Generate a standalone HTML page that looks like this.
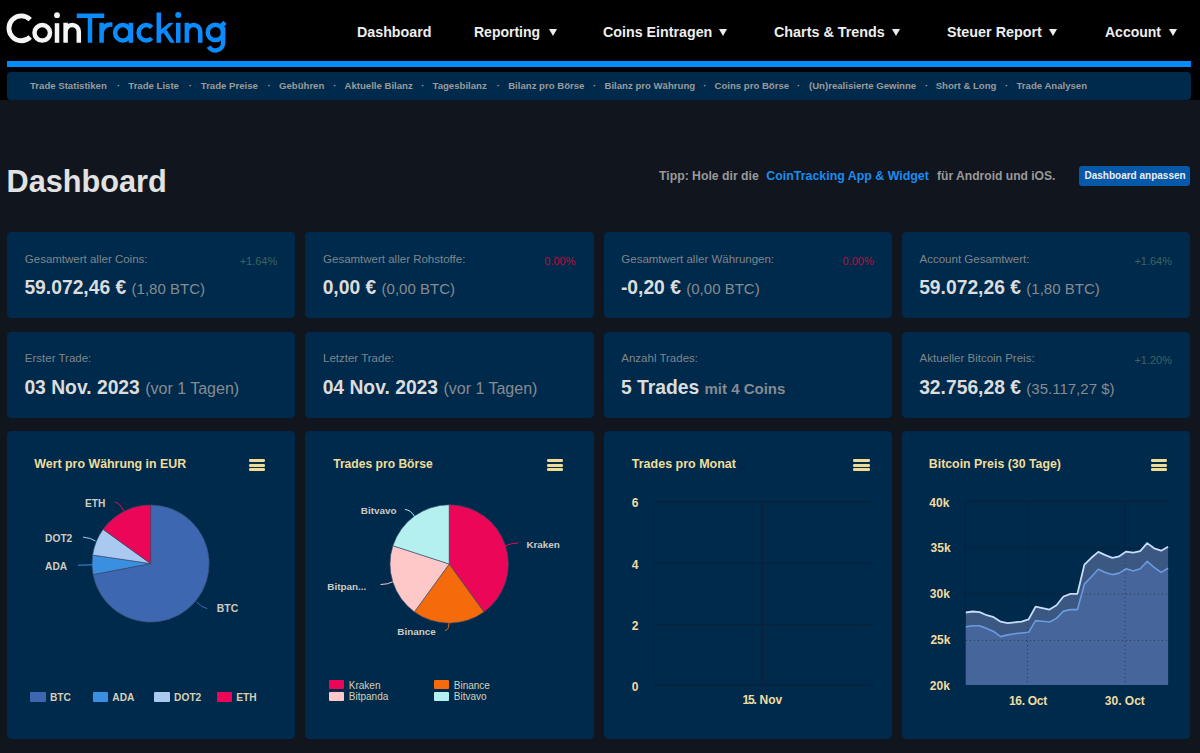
<!DOCTYPE html>
<html><head><meta charset="utf-8">
<style>
*{margin:0;padding:0;box-sizing:border-box}
html,body{width:1200px;height:753px;overflow:hidden;background:#11161e;font-family:"Liberation Sans",sans-serif}
.a{position:absolute;white-space:nowrap}
#hdr{position:absolute;left:0;top:0;width:1200px;height:100px;background:#000}
#bl{position:absolute;left:6.6px;top:61px;width:1184.2px;height:5.8px;background:#008cff}
#sub{position:absolute;left:6.6px;top:71.5px;width:1184.2px;height:28.3px;background:#002a4b;border-radius:4px}
.nav{font-weight:bold;font-size:14px;color:#eee;top:24px;line-height:16px}
.tri{position:absolute;top:28.5px;width:0;height:0;border-left:4.2px solid transparent;border-right:4.2px solid transparent;border-top:7.4px solid #eee}
.sn{font-weight:bold;font-size:9.6px;color:#9a9a9a;top:80px;line-height:12px}
.card{position:absolute;background:#002a4b;border-radius:4.5px}
.lbl{font-size:11.5px;color:#7f858c;line-height:14px}
.val{font-weight:bold;font-size:19.3px;color:#dcdcdc;line-height:22px}
.sec{font-size:15px;color:#878b90;font-weight:normal}
.pct{font-size:11px;color:#3f6262;line-height:12px}
.neg{color:#b8103c}
.ct{font-weight:bold;font-size:12.4px;color:#eedd9c;line-height:14px}
.hb{position:absolute;width:16px;height:13px}
.hb i{position:absolute;left:0;width:16.4px;height:3px;background:#eedc96;border-radius:1.2px}
</style></head><body>
<div id="hdr"></div>
<svg class="a" style="left:0;top:0" width="240" height="60" viewBox="0 0 240 60">
<g fill="none" stroke-width="4.5" stroke-linecap="butt">
<g stroke="#f5f5f5">
<path d="M30.2,19.7 A12.4,12.4 0 1 0 30.2,37" stroke-width="4.8"/>
<circle cx="42.25" cy="32.85" r="7.75"/>
<path d="M57,23.2 V42.8"/>
<path d="M65.6,22.7 V42.8 M65.6,31.5 A6.6,6.6 0 0 1 78.8,31.5 V42.8"/>
</g>
<circle cx="57" cy="15.2" r="2.9" fill="#f5f5f5"/>
<g stroke="#0a8cff">
<path d="M76.75,15.75 H104.25 M90,13.5 V42.8"/>
<path d="M101.6,22.8 V42.8 M101.6,33.6 A9,9 0 0 1 110.6,24.6 H112.4"/>
<circle cx="122.8" cy="32.8" r="7.7"/>
<path d="M130.9,22.8 V42.8"/>
<path d="M151.75,27.35 A7.7,7.7 0 1 0 151.75,38.25"/>
<path d="M158.8,12.5 V42.8"/>
<path d="M178.25,22.8 V42.8"/>
<path d="M186.85,22.7 V42.8 M186.85,31.65 A6.7,6.7 0 0 1 200.25,31.65 V42.8"/>
<circle cx="215.4" cy="32.4" r="7.7"/>
<path d="M223.1,27 V42.7 A7.7,7.7 0 0 1 208.7,46.55"/>
<path d="M221.8,25.6 L225,22.4"/>
</g>
<circle cx="178.25" cy="15" r="3" fill="#0a8cff"/>
<polygon points="160.5,30 168.8,23 173.6,23 160.5,35.2" fill="#0a8cff"/>
<polygon points="163.2,32.6 166.4,29.4 174.8,42.8 170.4,42.8" fill="#0a8cff"/>
</g>
</svg>
<div class="a nav" style="left:357px;font-size:14.25px">Dashboard</div>
<div class="a nav" style="left:474px">Reporting</div><div class="tri" style="left:548.5px"></div>
<div class="a nav" style="left:603px;font-size:14.25px">Coins Eintragen</div><div class="tri" style="left:719.3px"></div>
<div class="a nav" style="left:774px;font-size:14.35px">Charts &amp; Trends</div><div class="tri" style="left:892px"></div>
<div class="a nav" style="left:947px;font-size:14.35px">Steuer Report</div><div class="tri" style="left:1049.4px"></div>
<div class="a nav" style="left:1105px">Account</div><div class="tri" style="left:1168.6px"></div>
<div id="bl"></div>
<div id="sub"></div>
<div class="a sn" style="left:30px">Trade Statistiken</div>
<div class="a sn" style="left:117px">·</div>
<div class="a sn" style="left:128.3px">Trade Liste</div>
<div class="a sn" style="left:188.75px">·</div>
<div class="a sn" style="left:200.8px">Trade Preise</div>
<div class="a sn" style="left:267.5px">·</div>
<div class="a sn" style="left:279px">Gebühren</div>
<div class="a sn" style="left:333.25px">·</div>
<div class="a sn" style="left:344.5px">Aktuelle Bilanz</div>
<div class="a sn" style="left:421.25px">·</div>
<div class="a sn" style="left:432.5px">Tagesbilanz</div>
<div class="a sn" style="left:496.75px">·</div>
<div class="a sn" style="left:508.2px">Bilanz pro Börse</div>
<div class="a sn" style="left:593px">·</div>
<div class="a sn" style="left:604.5px">Bilanz pro Währung</div>
<div class="a sn" style="left:703.25px">·</div>
<div class="a sn" style="left:714.5px">Coins pro Börse</div>
<div class="a sn" style="left:797px">·</div>
<div class="a sn" style="left:809px">(Un)realisierte Gewinne</div>
<div class="a sn" style="left:925px">·</div>
<div class="a sn" style="left:935.7px">Short &amp; Long</div>
<div class="a sn" style="left:1005px">·</div>
<div class="a sn" style="left:1016.5px">Trade Analysen</div>

<!-- title row -->
<div class="a" style="left:6.5px;top:164.8px;font-weight:bold;font-size:30.7px;line-height:34px;color:#e2e2e2">Dashboard</div>
<div class="a" style="left:659px;top:168.5px;font-weight:bold;font-size:12.25px;line-height:14px;color:#999">Tipp: Hole dir die</div>
<div class="a" style="left:766.3px;top:168.5px;font-weight:bold;font-size:12.4px;line-height:14px;color:#1b8cf0">CoinTracking App &amp; Widget</div>
<div class="a" style="left:937px;top:168.5px;font-weight:bold;font-size:12.1px;line-height:14px;color:#999">für Android und iOS.</div>
<div class="a" style="left:1079px;top:165.5px;width:111px;height:20.5px;background:#0659a8;border-radius:3px"></div>
<div class="a" style="left:1084.5px;top:170.3px;font-weight:bold;font-size:10px;line-height:12px;color:#e8eef5">Dashboard anpassen</div>

<!-- CARDS -->
<div class="card" style="left:7px;top:232.2px;width:288.25px;height:86.2px"></div>
<div class="a lbl" style="left:24.8px;top:251.70px">Gesamtwert aller Coins:</div>
<div class="a val" style="left:24.4px;top:276.9px">59.072,46 € <span class="sec">(1,80 BTC)</span></div>
<div class="a pct" style="right:922.75px;top:254.5px">+1.64%</div>
<div class="card" style="left:305.25px;top:232.2px;width:288.25px;height:86.2px"></div>
<div class="a lbl" style="left:323.05px;top:251.70px">Gesamtwert aller Rohstoffe:</div>
<div class="a val" style="left:322.65px;top:276.9px">0,00 € <span class="sec">(0,00 BTC)</span></div>
<div class="a pct neg" style="right:624.5px;top:254.5px">0.00%</div>
<div class="card" style="left:603.5px;top:232.2px;width:288.25px;height:86.2px"></div>
<div class="a lbl" style="left:621.3px;top:251.70px">Gesamtwert aller Währungen:</div>
<div class="a val" style="left:620.9px;top:276.9px">-0,20 € <span class="sec">(0,00 BTC)</span></div>
<div class="a pct neg" style="right:326.25px;top:254.5px">0.00%</div>
<div class="card" style="left:901.75px;top:232.2px;width:288.25px;height:86.2px"></div>
<div class="a lbl" style="left:919.55px;top:251.70px">Account Gesamtwert:</div>
<div class="a val" style="left:919.15px;top:276.9px">59.072,26 € <span class="sec">(1,80 BTC)</span></div>
<div class="a pct" style="right:28.0px;top:254.5px">+1.64%</div>
<div class="card" style="left:7px;top:332.05px;width:288.25px;height:86.2px"></div>
<div class="a lbl" style="left:24.8px;top:350.95px">Erster Trade:</div>
<div class="a val" style="left:24.4px;top:376.75px">03 Nov. 2023 <span class="sec" style="font-size:16px">(vor 1 Tagen)</span></div>
<div class="card" style="left:305.25px;top:332.05px;width:288.25px;height:86.2px"></div>
<div class="a lbl" style="left:323.05px;top:350.95px">Letzter Trade:</div>
<div class="a val" style="left:322.65px;top:376.75px">04 Nov. 2023 <span class="sec" style="font-size:16px">(vor 1 Tagen)</span></div>
<div class="card" style="left:603.5px;top:332.05px;width:288.25px;height:86.2px"></div>
<div class="a lbl" style="left:621.3px;top:350.95px">Anzahl Trades:</div>
<div class="a val" style="left:620.9px;top:376.75px">5 Trades <span class="sec" style="font-weight:bold">mit 4 Coins</span></div>
<div class="card" style="left:901.75px;top:332.05px;width:288.25px;height:86.2px"></div>
<div class="a lbl" style="left:919.55px;top:350.95px">Aktueller Bitcoin Preis:</div>
<div class="a val" style="left:919.15px;top:376.75px">32.756,28 € <span class="sec">(35.117,27 $)</span></div>
<div class="a pct" style="right:28.0px;top:354.35px">+1.20%</div>
<!-- /CARDS -->
<!-- CHARTS -->
<div class="card" style="left:7px;top:431.2px;width:288.25px;height:307.9px"></div>
<div class="card" style="left:305.25px;top:431.2px;width:288.25px;height:307.9px"></div>
<div class="card" style="left:603.5px;top:431.2px;width:288.25px;height:307.9px"></div>
<div class="card" style="left:901.75px;top:431.2px;width:288.25px;height:307.9px"></div>
<div class="a ct" style="left:34.3px;top:456.7px;font-size:12.4px">Wert pro Währung in EUR</div>
<div class="a ct" style="left:333.2px;top:456.7px;font-size:12.1px">Trades pro Börse</div>
<div class="a ct" style="left:631.8px;top:456.7px;font-size:12.5px">Trades pro Monat</div>
<div class="a ct" style="left:928.8px;top:456.7px;font-size:12.35px">Bitcoin Preis (30 Tage)</div>
<div class="hb" style="left:248.6px;top:458.9px"><i style="top:0"></i><i style="top:4.75px"></i><i style="top:9.55px"></i></div>
<div class="hb" style="left:547px;top:458.9px"><i style="top:0"></i><i style="top:4.75px"></i><i style="top:9.55px"></i></div>
<div class="hb" style="left:853.3px;top:458.9px"><i style="top:0"></i><i style="top:4.75px"></i><i style="top:9.55px"></i></div>
<div class="hb" style="left:1150.8px;top:458.9px"><i style="top:0"></i><i style="top:4.75px"></i><i style="top:9.55px"></i></div>
<svg class="a" style="left:0;top:0" width="1200" height="753" viewBox="0 0 1200 753">
<path d="M150.6,563.6 L150.60,505.00 A58.6,58.6 0 1 1 93.04,574.58 Z" fill="#3d67b1" stroke="#3a4a66" stroke-width="0.6" stroke-linejoin="round"/>
<path d="M150.6,563.6 L93.04,574.58 A58.6,58.6 0 0 1 92.63,555.04 Z" fill="#3a8fe0" stroke="#3a4a66" stroke-width="0.6" stroke-linejoin="round"/>
<path d="M150.6,563.6 L92.63,555.04 A58.6,58.6 0 0 1 103.07,529.32 Z" fill="#a9c9f1" stroke="#3a4a66" stroke-width="0.6" stroke-linejoin="round"/>
<path d="M150.6,563.6 L103.07,529.32 A58.6,58.6 0 0 1 150.60,505.00 Z" fill="#eb0658" stroke="#3a4a66" stroke-width="0.6" stroke-linejoin="round"/>
<g fill="none" stroke-width="1">
<path d="M114.7,502.2 Q121,503.5 123.6,511.1" stroke="#eb0658"/>
<path d="M83,537.1 Q91,537.8 95.5,541" stroke="#a9c9f1"/>
<path d="M78,565.2 L92.5,564.8" stroke="#3a8fe0"/>
<path d="M196.6,602 Q202,607.5 207.3,608.7" stroke="#3d67b1"/>
</g>
<path d="M449.2,564 L449.20,504.80 A59.2,59.2 0 0 1 484.00,611.89 Z" fill="#eb0658" stroke="#3a4a66" stroke-width="0.6" stroke-linejoin="round"/>
<path d="M449.2,564 L484.00,611.89 A59.2,59.2 0 0 1 414.40,611.89 Z" fill="#f56a0a" stroke="#3a4a66" stroke-width="0.6" stroke-linejoin="round"/>
<path d="M449.2,564 L414.40,611.89 A59.2,59.2 0 0 1 392.90,545.71 Z" fill="#ffc8c8" stroke="#3a4a66" stroke-width="0.6" stroke-linejoin="round"/>
<path d="M449.2,564 L392.90,545.71 A59.2,59.2 0 0 1 449.20,504.80 Z" fill="#b3f0ef" stroke="#3a4a66" stroke-width="0.6" stroke-linejoin="round"/>
<g fill="none" stroke-width="1">
<path d="M505.9,545.6 Q511,543.2 518,543.1" stroke="#eb0658"/>
<path d="M448.9,623.4 Q448.9,630 444.9,630.6" stroke="#f56a0a"/>
<path d="M380.5,584.5 Q388,584.5 392.6,581.8" stroke="#ffc8c8"/>
<path d="M405,509.5 Q411,510 414.5,516.5" stroke="#b3f0ef"/>
</g>
<g stroke="#0c2139" stroke-width="1" fill="none">
<path d="M653.6,501.7 H871.8"/>
<path d="M653.6,563.4 H871.8"/>
<path d="M653.6,624.7 H871.8"/>
<path d="M653.6,685.1 H871.8"/>
<path d="M653.6,501.7 V685.1"/>
<path d="M762.6,501.7 V685.1"/>
</g>
<g stroke="#0c2139" stroke-width="1" fill="none">
<path d="M965.4,501.4 H1168"/>
<path d="M965.4,548.2 H1168"/>
<path d="M965.4,594.1 H1168"/>
<path d="M965.4,640.4 H1168"/>
<path d="M965.4,501.4 V685.1 M1027.5,501.4 V685.1 M1125,501.4 V685.1"/>
</g>
<polygon points="965.8,685.1 965.80,612.5 972.78,611.5 979.75,612.1 986.73,615.2 993.70,617.2 1000.68,621.7 1007.66,623.1 1014.63,622.3 1021.61,621.7 1028.58,619.4 1035.56,606.7 1042.53,608.2 1049.51,609.6 1056.49,605.2 1063.46,596.5 1070.44,593.8 1077.41,593.8 1084.39,564.6 1091.37,557.8 1098.34,551.9 1105.32,555.1 1112.29,557.8 1119.27,556.3 1126.24,551.6 1133.22,552.6 1140.20,551.2 1147.17,543.1 1154.15,548.3 1161.12,550.7 1168.10,546.8 1168.10,685.1" fill="#3a5882"/>
<polygon points="965.8,685.1 965.80,626.7 972.78,625.7 979.75,625.7 986.73,628.6 993.70,631.5 1000.68,636.6 1007.66,634.9 1014.63,633.7 1021.61,633.0 1028.58,632.3 1035.56,620.6 1042.53,621.3 1049.51,622.0 1056.49,618.4 1063.46,611.1 1070.44,609.6 1077.41,609.6 1084.39,584.1 1091.37,576.7 1098.34,569.2 1105.32,572.4 1112.29,574.6 1119.27,573.1 1126.24,568.7 1133.22,570.9 1140.20,568.7 1147.17,561.4 1154.15,567.3 1161.12,572.4 1168.10,568.3 1168.10,685.1" fill="#46659a"/>
<clipPath id="ac"><polygon points="965.8,685.1 965.80,612.5 972.78,611.5 979.75,612.1 986.73,615.2 993.70,617.2 1000.68,621.7 1007.66,623.1 1014.63,622.3 1021.61,621.7 1028.58,619.4 1035.56,606.7 1042.53,608.2 1049.51,609.6 1056.49,605.2 1063.46,596.5 1070.44,593.8 1077.41,593.8 1084.39,564.6 1091.37,557.8 1098.34,551.9 1105.32,555.1 1112.29,557.8 1119.27,556.3 1126.24,551.6 1133.22,552.6 1140.20,551.2 1147.17,543.1 1154.15,548.3 1161.12,550.7 1168.10,546.8 1168.10,685.1"/></clipPath>
<g stroke="#22395a" stroke-width="1" stroke-dasharray="1,3" fill="none" clip-path="url(#ac)">
<path d="M966,594.1 H1168"/>
<path d="M966,640.4 H1168"/>
<path d="M1027.5,501 V685.1 M1125,501 V685.1"/>
</g>
<polyline points="965.80,626.7 972.78,625.7 979.75,625.7 986.73,628.6 993.70,631.5 1000.68,636.6 1007.66,634.9 1014.63,633.7 1021.61,633.0 1028.58,632.3 1035.56,620.6 1042.53,621.3 1049.51,622.0 1056.49,618.4 1063.46,611.1 1070.44,609.6 1077.41,609.6 1084.39,584.1 1091.37,576.7 1098.34,569.2 1105.32,572.4 1112.29,574.6 1119.27,573.1 1126.24,568.7 1133.22,570.9 1140.20,568.7 1147.17,561.4 1154.15,567.3 1161.12,572.4 1168.10,568.3" fill="none" stroke="#6b9be0" stroke-width="1.6" stroke-linejoin="round"/>
<polyline points="965.80,612.5 972.78,611.5 979.75,612.1 986.73,615.2 993.70,617.2 1000.68,621.7 1007.66,623.1 1014.63,622.3 1021.61,621.7 1028.58,619.4 1035.56,606.7 1042.53,608.2 1049.51,609.6 1056.49,605.2 1063.46,596.5 1070.44,593.8 1077.41,593.8 1084.39,564.6 1091.37,557.8 1098.34,551.9 1105.32,555.1 1112.29,557.8 1119.27,556.3 1126.24,551.6 1133.22,552.6 1140.20,551.2 1147.17,543.1 1154.15,548.3 1161.12,550.7 1168.10,546.8" fill="none" stroke="#c6dcf8" stroke-width="1.8" stroke-linejoin="round"/>
</svg>
<div class="a" style="left:85.0px;top:498.47px;font-size:10.2px;font-weight:bold;line-height:12px;color:#cfcbc2">ETH</div>
<div class="a" style="left:45.1px;top:533.17px;font-size:10.2px;font-weight:bold;line-height:12px;color:#cfcbc2">DOT2</div>
<div class="a" style="left:45.1px;top:560.97px;font-size:10.2px;font-weight:bold;line-height:12px;color:#cfcbc2">ADA</div>
<div class="a" style="left:216.8px;top:603.3px;font-size:10.4px;font-weight:bold;line-height:12px;color:#cfcbc2">BTC</div>
<div class="a" style="left:360.8px;top:505.37px;font-size:9.9px;font-weight:bold;line-height:12px;color:#cfcbc2">Bitvavo</div>
<div class="a" style="left:526.4px;top:538.77px;font-size:9.9px;font-weight:bold;line-height:12px;color:#cfcbc2">Kraken</div>
<div class="a" style="left:327.3px;top:580.77px;font-size:9.9px;font-weight:bold;line-height:12px;color:#cfcbc2">Bitpan...</div>
<div class="a" style="left:397.3px;top:626.47px;font-size:9.9px;font-weight:bold;line-height:12px;color:#cfcbc2">Binance</div>
<div class="a" style="left:30.4px;top:692.4px;width:15.4px;height:9.3px;background:#3d67b1;border-radius:1px"></div>
<div class="a" style="left:50px;top:692.27px;font-size:10.2px;font-weight:bold;line-height:12px;color:#d8d0b6">BTC</div>
<div class="a" style="left:92.6px;top:692.4px;width:15.4px;height:9.3px;background:#3a8fe0;border-radius:1px"></div>
<div class="a" style="left:112.3px;top:692.27px;font-size:10.2px;font-weight:bold;line-height:12px;color:#d8d0b6">ADA</div>
<div class="a" style="left:154.3px;top:692.4px;width:15.4px;height:9.3px;background:#a9c9f1;border-radius:1px"></div>
<div class="a" style="left:174.1px;top:692.27px;font-size:10.2px;font-weight:bold;line-height:12px;color:#d8d0b6">DOT2</div>
<div class="a" style="left:216.5px;top:692.4px;width:15.4px;height:9.3px;background:#eb0658;border-radius:1px"></div>
<div class="a" style="left:236.3px;top:692.27px;font-size:10.2px;font-weight:bold;line-height:12px;color:#d8d0b6">ETH</div>
<div class="a" style="left:329.2px;top:680.3px;width:15px;height:9.2px;background:#eb0658;border-radius:1px"></div>
<div class="a" style="left:348.8px;top:679.53px;font-size:10px;font-weight:normal;line-height:12px;color:#d8d0b6">Kraken</div>
<div class="a" style="left:329.2px;top:692px;width:15px;height:9.2px;background:#ffc8c8;border-radius:1px"></div>
<div class="a" style="left:348.8px;top:690.83px;font-size:10px;font-weight:normal;line-height:12px;color:#d8d0b6">Bitpanda</div>
<div class="a" style="left:434.2px;top:680.3px;width:15px;height:9.2px;background:#f56a0a;border-radius:1px"></div>
<div class="a" style="left:453.8px;top:679.53px;font-size:10px;font-weight:normal;line-height:12px;color:#d8d0b6">Binance</div>
<div class="a" style="left:434.2px;top:692px;width:15px;height:9.2px;background:#b3f0ef;border-radius:1px"></div>
<div class="a" style="left:453.8px;top:690.83px;font-size:10px;font-weight:normal;line-height:12px;color:#d8d0b6">Bitvavo</div>
<div class="a" style="left:631.8px;top:497.34px;font-size:12px;font-weight:bold;line-height:12px;color:#f0dca0">6</div>
<div class="a" style="left:631.8px;top:558.64px;font-size:12px;font-weight:bold;line-height:12px;color:#f0dca0">4</div>
<div class="a" style="left:631.8px;top:620.04px;font-size:12px;font-weight:bold;line-height:12px;color:#f0dca0">2</div>
<div class="a" style="left:631.8px;top:680.84px;font-size:12px;font-weight:bold;line-height:12px;color:#f0dca0">0</div>
<div class="a" style="left:742.6px;top:694.34px;font-size:12px;font-weight:bold;line-height:12px;letter-spacing:-1.2px;color:#f0dca0">15.</div>
<div class="a" style="left:759.6px;top:694.34px;font-size:12px;font-weight:bold;line-height:12px;color:#f0dca0">Nov</div>
<div class="a" style="left:929.3px;top:496.54px;font-size:12px;font-weight:bold;line-height:12px;color:#f0dca0">40k</div>
<div class="a" style="left:930.6px;top:542.44px;font-size:12px;font-weight:bold;line-height:12px;color:#f0dca0">35k</div>
<div class="a" style="left:929.8px;top:588.34px;font-size:12px;font-weight:bold;line-height:12px;color:#f0dca0">30k</div>
<div class="a" style="left:930.4px;top:634.24px;font-size:12px;font-weight:bold;line-height:12px;color:#f0dca0">25k</div>
<div class="a" style="left:929.8px;top:680.14px;font-size:12px;font-weight:bold;line-height:12px;color:#f0dca0">20k</div>
<div class="a" style="left:1009px;top:694.54px;font-size:12px;font-weight:bold;line-height:12px;letter-spacing:-0.3px;color:#f0dca0">16. Oct</div>
<div class="a" style="left:1104.8px;top:694.54px;font-size:12px;font-weight:bold;line-height:12px;color:#f0dca0">30. Oct</div>
<!-- /CHARTS -->
</body></html>
